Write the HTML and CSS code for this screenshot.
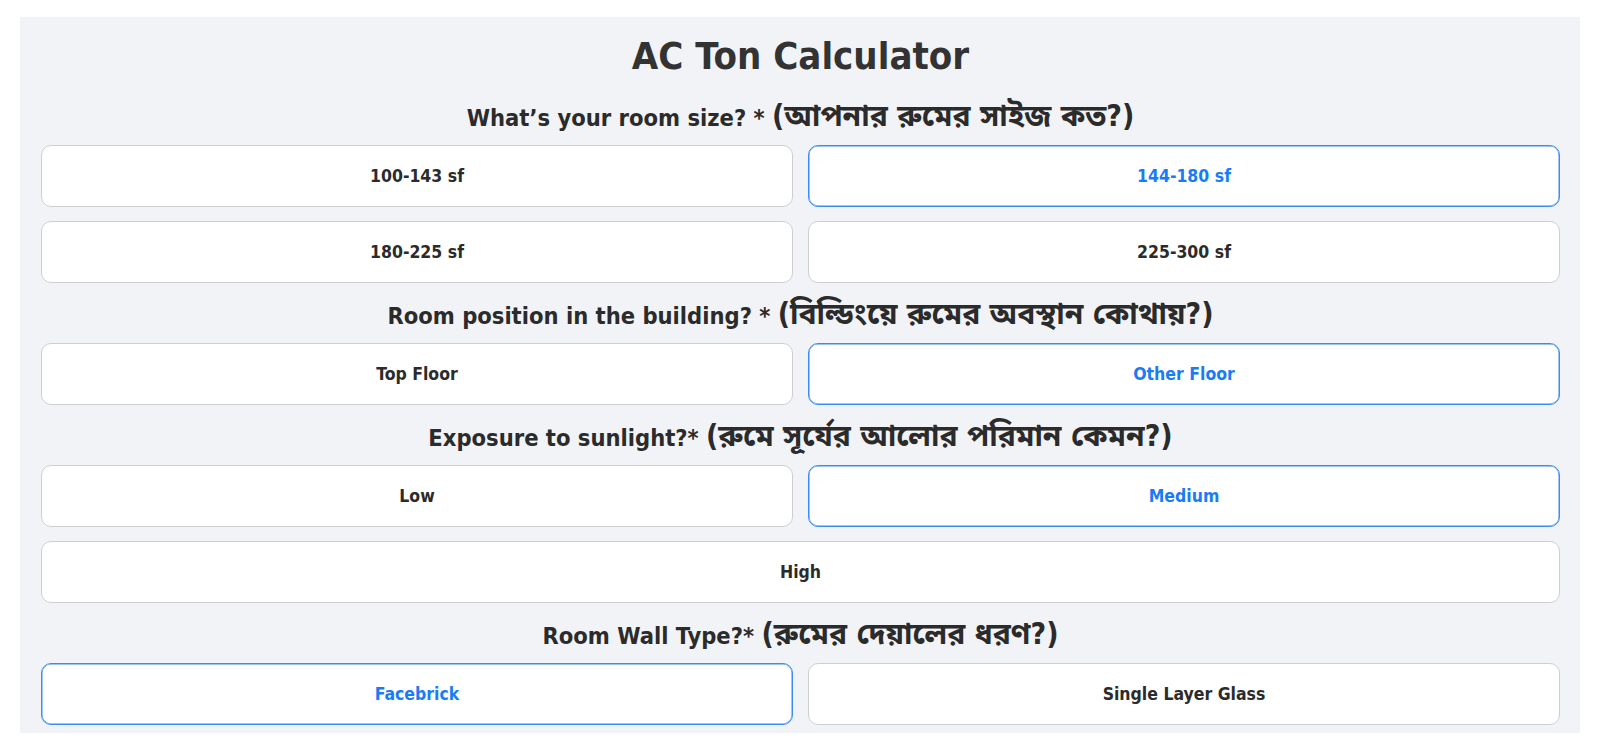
FILE: index.html
```html
<!DOCTYPE html>
<html lang="en">
<head>
<meta charset="utf-8">
<title>AC Ton Calculator</title>
<link rel="stylesheet" href="styles.css">
</head>
<body>
<main class="panel">
  <h1 class="title">AC Ton Calculator</h1>

  <h2 class="question">What’s your room size? * <span class="bn">(আপনার রুমের সাইজ কত?)</span></h2>
  <div class="options">
    <button class="opt">100-143 sf</button>
    <button class="opt selected">144-180 sf</button>
    <button class="opt">180-225 sf</button>
    <button class="opt">225-300 sf</button>
  </div>

  <h2 class="question">Room position in the building? * <span class="bn">(বিল্ডিংয়ে রুমের অবস্থান কোথায়?)</span></h2>
  <div class="options">
    <button class="opt">Top Floor</button>
    <button class="opt selected">Other Floor</button>
  </div>

  <h2 class="question">Exposure to sunlight?* <span class="bn">(রুমে সূর্যের আলোর পরিমান কেমন?)</span></h2>
  <div class="options">
    <button class="opt">Low</button>
    <button class="opt selected">Medium</button>
    <button class="opt wide">High</button>
  </div>

  <h2 class="question">Room Wall Type?* <span class="bn">(রুমের দেয়ালের ধরণ?)</span></h2>
  <div class="options">
    <button class="opt selected">Facebrick</button>
    <button class="opt">Single Layer Glass</button>
  </div>
</main>
</body>
</html>
```

FILE: styles.css
```css
html, body {
  margin: 0;
  padding: 0;
  background: #ffffff;
}

body {
  padding: 17px 20px 0 20px;
  font-family: "DejaVu Sans Condensed", "DejaVu Sans", "Noto Sans Bengali", "Lohit Bengali", "FreeSans", sans-serif;
  color: #2b2b2b;
}

.panel {
  background: #f2f3f7;
  padding: 15px 20px 8px 21px;
  height: 716px;
  box-sizing: border-box;
  overflow: hidden;
}

.title {
  margin: 0 0 21px 0;
  font-size: 38px;
  line-height: 48px;
  font-weight: bold;
  text-align: center;
  color: #333333;
}

.question {
  margin: 16px 0 14px 0;
  height: 30px;
  font-size: 23.5px;
  line-height: 30px;
  font-weight: bold;
  text-align: center;
  color: #2b2b2b;
  white-space: nowrap;
}

.question .bn {
  font-size: 30px;
  line-height: 30px;
}

.title + .question {
  margin-top: 0;
}

.options {
  display: grid;
  grid-template-columns: 1fr 1fr;
  gap: 14px 15px;
}

.opt {
  height: 62px;
  background: #ffffff;
  border: 1px solid #cfcfd2;
  border-radius: 10px;
  font-family: inherit;
  font-size: 17.5px;
  font-weight: bold;
  color: #2b2b2b;
  cursor: pointer;
  padding: 0;
}

.opt.selected {
  border-color: #3a8cf5;
  box-shadow: inset 0 0 0 0.5px #3a8cf5;
  color: #1a7cf5;
}

.opt.wide {
  grid-column: 1 / -1;
}
```
